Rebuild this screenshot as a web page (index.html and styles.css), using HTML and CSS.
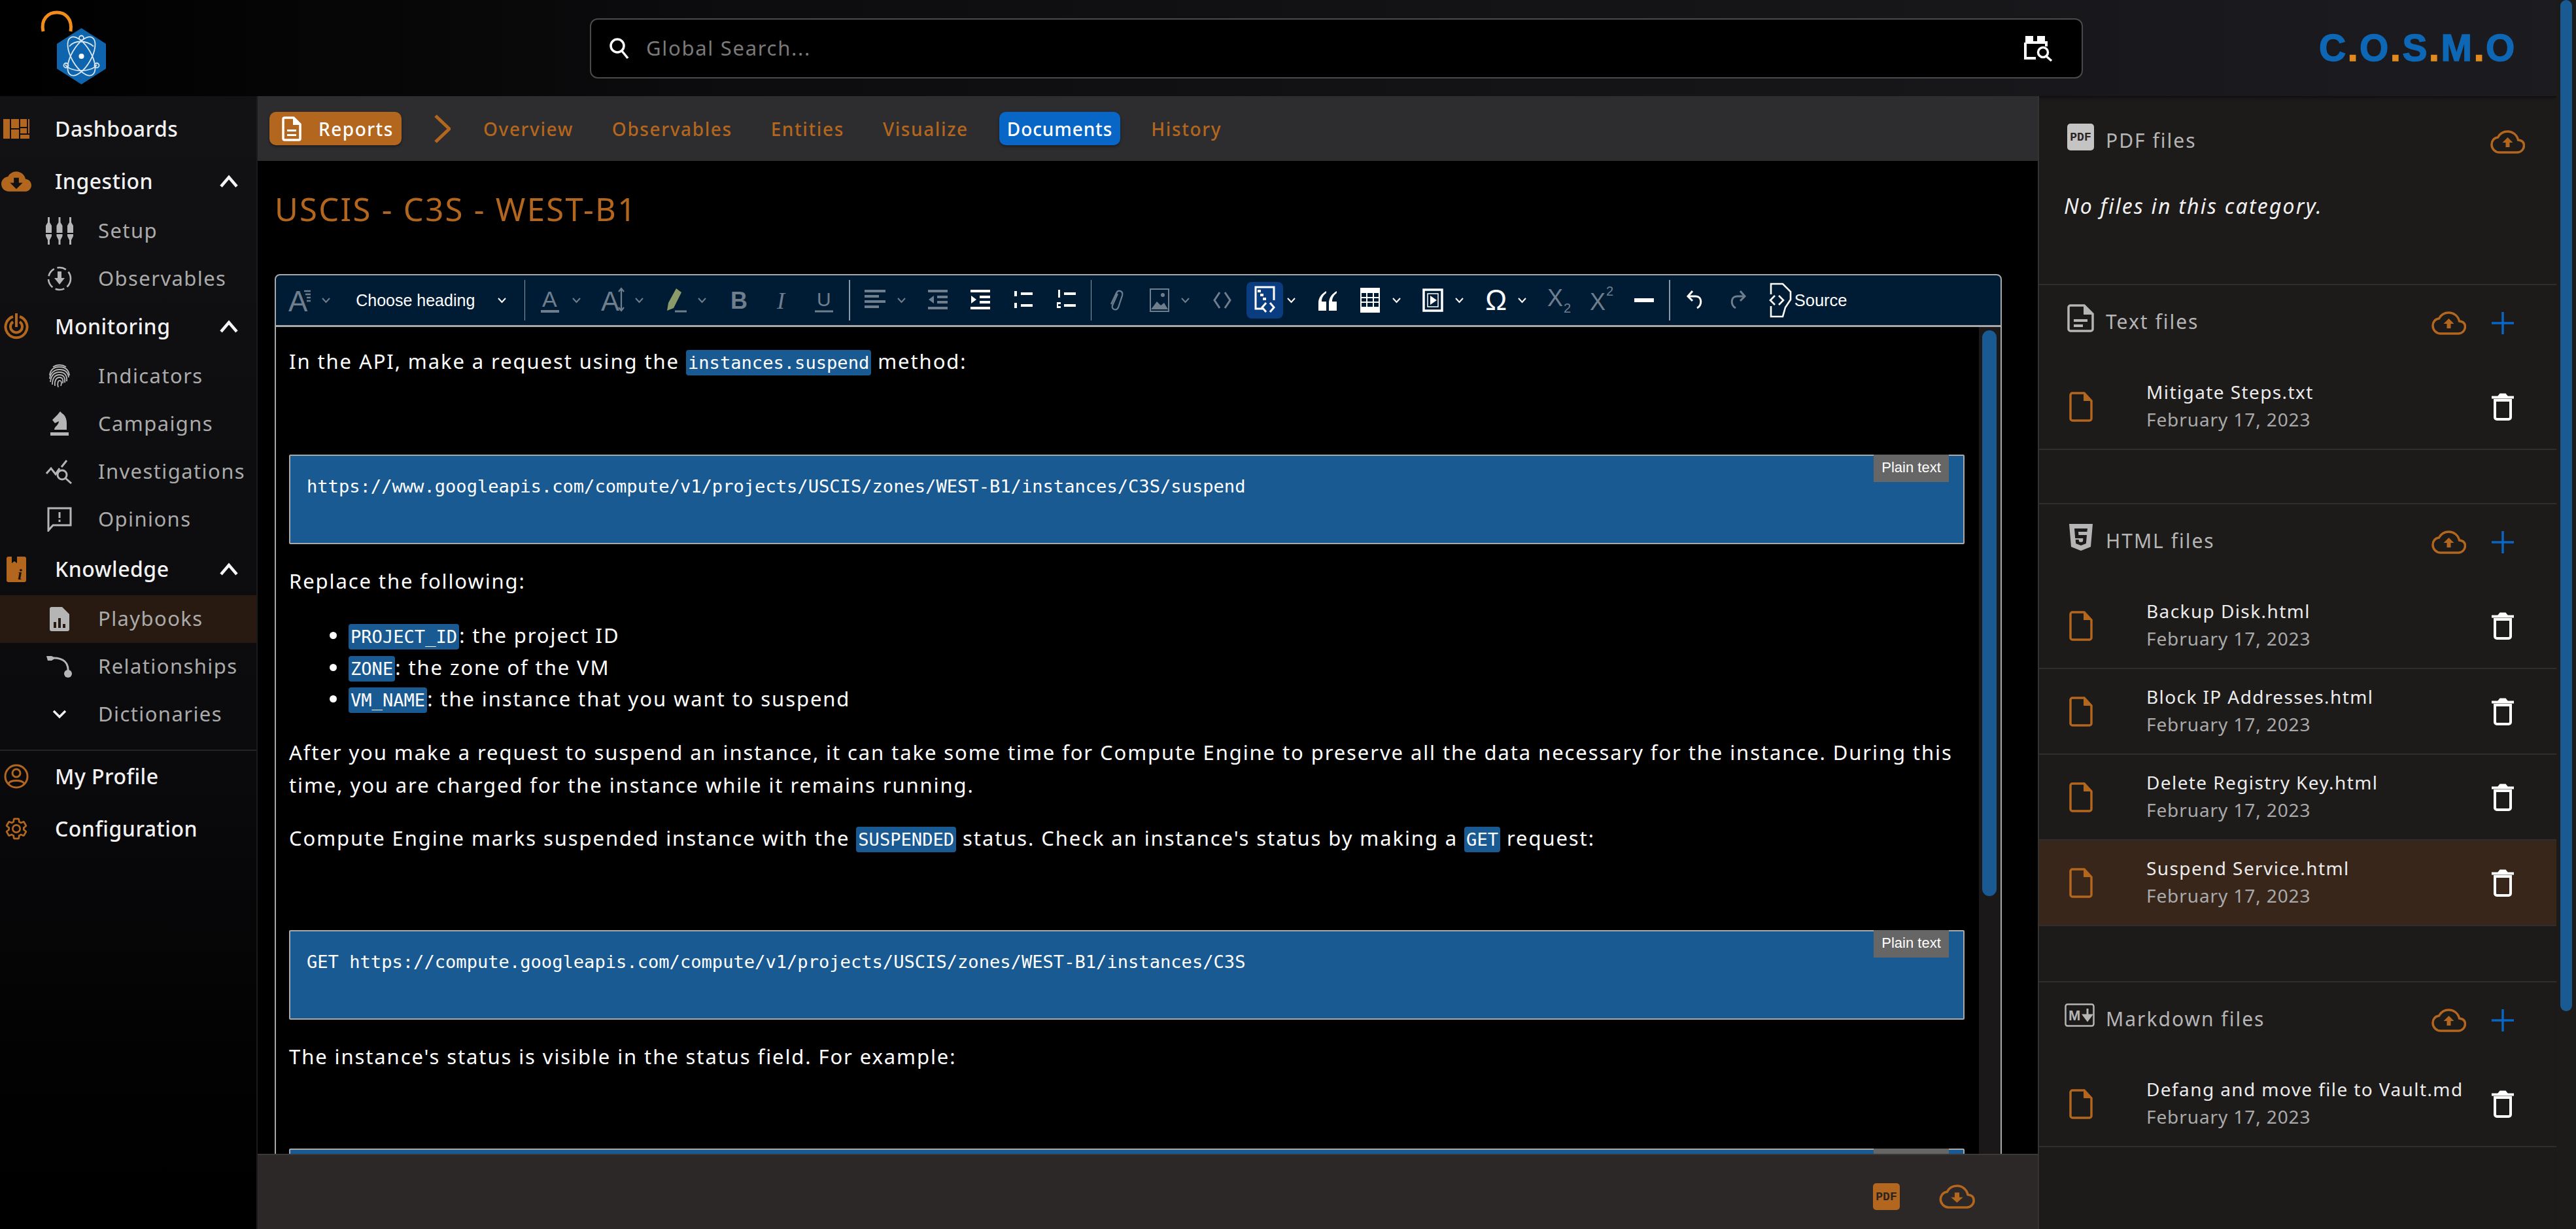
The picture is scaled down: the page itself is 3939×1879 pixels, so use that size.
FILE: index.html
```html
<!DOCTYPE html>
<html lang="en">
<head>
<meta charset="utf-8">
<title>C.O.S.M.O Reports</title>
<link rel="stylesheet" href="styles.css">
</head>
<body>
<svg class="defs" width="0" height="0" aria-hidden="true">
  <defs>
    <symbol id="cloud-up" viewBox="0 0 53 36"><path d="M42.5 15C40.8 7 34 2 26.5 2 20 2 14.500 5.500 11.500 11 5.500 11.500 2 16.500 2 22c0 6.500 5.500 12 12 12h27c6 0 10.500-4.800 10.500-10.500C51.500 18 47.500 15.500 42.500 15z" fill="none" stroke="currentColor" stroke-width="3.500"/><path d="M26.500 11l8 8h-5v7h-6v-7h-5z" fill="currentColor"/></symbol>
    <symbol id="cloud-down" viewBox="0 0 53 36"><path d="M42.500 15C40.800 7 34 2 26.500 2 20 2 14.500 5.500 11.500 11 5.500 11.500 2 16.500 2 22c0 6.500 5.500 12 12 12h27c6 0 10.500-4.800 10.500-10.500C51.500 18 47.500 15.500 42.500 15z" fill="none" stroke="currentColor" stroke-width="3.500"/><path d="M26.500 27l-9-8h5.500v-7h7v7h5.500z" fill="currentColor"/></symbol>
    <symbol id="plus" viewBox="0 0 34 34"><path d="M17 0v34M0 17h34" stroke="currentColor" stroke-width="3.500" fill="none"/></symbol>
    <symbol id="file" viewBox="0 0 36 46"><path d="M5 2h18l11 12v27a3 3 0 0 1-3 3H5a3 3 0 0 1-3-3V5a3 3 0 0 1 3-3z" fill="none" stroke="currentColor" stroke-width="3.500"/><path d="M22 2l12 12H22z" fill="currentColor"/></symbol>
    <symbol id="trash" viewBox="0 0 34 42"><path d="M0 6.500h34" stroke="currentColor" stroke-width="4"/><path d="M11 4l2-2.500h8L23 4z" fill="currentColor" stroke="currentColor" stroke-width="2"/><path d="M5 11h24v26a3 3 0 0 1-3 3H8a3 3 0 0 1-3-3z" fill="none" stroke="currentColor" stroke-width="4"/></symbol>
    <symbol id="chev" viewBox="0 0 15 12"><path d="M2 3l5.500 6L13 3" fill="none" stroke="currentColor" stroke-width="2"/></symbol>
    <symbol id="up" viewBox="0 0 30 24"><path d="M3 20L15 6l12 14" fill="none" stroke="currentColor" stroke-width="4.500"/></symbol>
  </defs>
</svg>

<div class="app">
  <div class="page">
    <header class="top">
      <div class="logo">
        <svg width="105" height="115" viewBox="60 15 105 115">
          <path d="M66 47C62 28 74 18 87 18s24 10 21 29" fill="none" stroke="#f28c1c" stroke-width="5"/>
          <path d="M124.500 42L162 66v38l-37.500 24L87 104V66z" fill="#0f65ad"/>
          <g fill="none" stroke="#d8e6f2" stroke-width="1.800">
            <ellipse cx="124.500" cy="85" rx="33" ry="15" transform="rotate(60 124.500 85)"/>
            <ellipse cx="124.500" cy="85" rx="33" ry="15" transform="rotate(-60 124.500 85)"/>
            <path d="M106 70c8-10 26-10 37 0M100 98c8 12 40 12 48 0"/>
            <circle cx="124.500" cy="57" r="3.500"/><circle cx="101" cy="99" r="3.500"/><circle cx="148" cy="99" r="3.500"/>
          </g>
          <circle cx="124.500" cy="85" r="4" fill="#fff"/>
        </svg>
      </div>
      <div class="search">
        <svg class="search-ic" width="32" height="34" viewBox="0 0 32 34"><circle cx="13" cy="13" r="10" fill="none" stroke="#fff" stroke-width="3.500"/><path d="M20 21l9 11" stroke="#fff" stroke-width="3.500"/></svg>
        <span class="search-ph">Global Search...</span>
        <svg class="search-cal" width="46" height="42" viewBox="0 0 46 42"><path d="M2 12h32v6M2 12v24h16" fill="none" stroke="#fff" stroke-width="4"/><path d="M2 2h12v8H2zM20 2h12v8H20z" fill="#fff"/><circle cx="29" cy="27" r="7.500" fill="none" stroke="#fff" stroke-width="3.500"/><path d="M34 33l8 7" stroke="#fff" stroke-width="3.500"/></svg>
      </div>
      <div class="brand"><span>C</span><i>.</i><span>O</span><i>.</i><span>S</span><i>.</i><span>M</span><i>.</i><span>O</span></div>
    </header>

    <div class="body">
      <nav class="side">
        <a class="ni top-i first">
          <span class="ni-ic or"><svg width="40" height="30" viewBox="0 0 40 30"><path d="M0 0h10v30H0zM12 0h12v14H12zM12 16h12v14H12zM26 0h10v12H26zM38 0h2v22h-2zM26 14h10v8H26zM26 24h14v6H26z" fill="currentColor"/></svg></span>
          <span class="ni-t">Dashboards</span>
        </a>
        <a class="ni top-i gap">
          <span class="ni-ic or"><svg width="46" height="31" viewBox="0 0 24 16"><path d="M19.350 6.040C18.670 2.590 15.640 0 12 0 9.110 0 6.600 1.640 5.350 4.040 2.340 4.360 0 6.910 0 10c0 3.310 2.690 6 6 6h13c2.760 0 5-2.240 5-5 0-2.640-2.050-4.780-4.650-4.960zM17 9l-5 5-5-5h3V5h4v4h3z" fill="currentColor"/></svg></span>
          <span class="ni-t">Ingestion</span>
          <svg class="ni-up" width="30" height="24"><use href="#up"/></svg>
        </a>
        <a class="ni sub subfirst">
          <span class="ni-ic"><svg width="42" height="42" viewBox="0 0 42 42"><path d="M3 0h3v8l3 5v11H0V13l3-5zM19.500 0h3v8l3 5v11h-9V13l3-5zM36 0h3v8l3 5v11h-9V13l3-5zM0 26h9v3l-3 6v7H3v-7l-3-6zM16.500 26h9v3l-3 6v7h-3v-7l-3-6zM33 26h9v3l-3 6v7h-3v-7l-3-6z" fill="currentColor"/></svg></span>
          <span class="ni-t">Setup</span>
        </a>
        <a class="ni sub">
          <span class="ni-ic"><svg width="38" height="38" viewBox="0 0 38 38"><circle cx="19" cy="19" r="17" fill="none" stroke="currentColor" stroke-width="2.600" stroke-dasharray="14 5"/><path d="M16 8h6v10h5l-8 10-8-10h5z" fill="currentColor"/></svg></span>
          <span class="ni-t">Observables</span>
        </a>
        <a class="ni top-i">
          <span class="ni-ic or"><svg width="38" height="40" viewBox="0 0 38 40"><g fill="none" stroke="currentColor" stroke-width="4"><path d="M24 5a16.500 16.500 0 1 1-10 0"/><path d="M24 13a9 9 0 1 1-10 0"/><path d="M19 0v21"/></g></svg></span>
          <span class="ni-t">Monitoring</span>
          <svg class="ni-up" width="30" height="24"><use href="#up"/></svg>
        </a>
        <a class="ni sub subfirst">
          <span class="ni-ic"><svg width="34" height="38" viewBox="0 0 34 38"><g fill="none" stroke="currentColor" stroke-width="1.800"><path d="M7 5c6-4 14-4 20 0"/><path d="M2 18C3 9 9 5 17 5s14 4 15 13"/><path d="M2 23C3 14 9 9 17 9s13 4 14 12"/><path d="M3 28C4 18 9 13 17 13s12 5 11 14"/><path d="M6 32C6 22 10 17 17 17s9 5 8 12"/><path d="M10 34c-1-8 2-13 7-13s6 4 5 9"/><path d="M15 36c-2-6 0-11 3-10s2 5 1 8"/></g></svg></span>
          <span class="ni-t">Indicators</span>
        </a>
        <a class="ni sub">
          <span class="ni-ic"><svg width="28" height="38" viewBox="0 0 28 38"><path d="M15 0l3 3c5 3 7 9 7 15v10H6c0-5 7-7 7-13l-6 3-4-5 8-8z" fill="currentColor"/><path d="M0 32h28v5H0z" fill="currentColor"/></svg></span>
          <span class="ni-t">Campaigns</span>
        </a>
        <a class="ni sub">
          <span class="ni-ic"><svg width="42" height="38" viewBox="0 0 42 38"><g fill="none" stroke="currentColor" stroke-width="3"><path d="M1 22l7-8 7 9 6-9M24 12l8-10"/><circle cx="25" cy="24" r="7"/><path d="M30 29l9 8"/></g></svg></span>
          <span class="ni-t">Investigations</span>
        </a>
        <a class="ni sub">
          <span class="ni-ic"><svg width="40" height="38" viewBox="0 0 40 38"><path d="M3 2h34v26H10l-7 8z" fill="none" stroke="currentColor" stroke-width="3"/><path d="M18.500 8h3v9h-3zM18.500 19.500h3v3.500h-3z" fill="currentColor"/></svg></span>
          <span class="ni-t">Opinions</span>
        </a>
        <a class="ni top-i gap-s">
          <span class="ni-ic or"><svg width="30" height="39" viewBox="0 0 30 39"><path d="M3 0h5v10l4-3 4 3V0h11a3 3 0 0 1 3 3v33a3 3 0 0 1-3 3H3a3 3 0 0 1-3-3V3a3 3 0 0 1 3-3z" fill="currentColor"/><text class="gl-i" x="17" y="35">i</text></svg></span>
          <span class="ni-t">Knowledge</span>
          <svg class="ni-up" width="30" height="24"><use href="#up"/></svg>
        </a>
        <a class="ni sub subfirst active">
          <span class="ni-ic"><svg width="30" height="37" viewBox="0 0 30 37"><path d="M3 0h16l11 11v23a3 3 0 0 1-3 3H3a3 3 0 0 1-3-3V3a3 3 0 0 1 3-3z" fill="currentColor"/><path d="M6 23h4v9H6zM13 17h4v15h-4zM20 26h4v6h-4z" fill="#281a11"/></svg></span>
          <span class="ni-t">Playbooks</span>
        </a>
        <a class="ni sub">
          <span class="ni-ic"><svg width="42" height="38" viewBox="0 0 42 38"><path d="M12 6c14 0 24 6 22 24" fill="none" stroke="currentColor" stroke-width="3"/><path d="M1 3h8l6 3-6 4H3z" fill="currentColor"/><circle cx="34" cy="30" r="6" fill="currentColor"/></svg></span>
          <span class="ni-t">Relationships</span>
        </a>
        <a class="ni sub">
          <span class="ni-ic lt"><svg width="22" height="14" viewBox="0 0 22 14"><path d="M2 2l9 9 9-9" fill="none" stroke="currentColor" stroke-width="3.500"/></svg></span>
          <span class="ni-t">Dictionaries</span>
        </a>
        <div class="side-foot">
          <a class="ni top-i">
            <span class="ni-ic or"><svg width="38" height="38" viewBox="0 0 38 38"><circle cx="19" cy="19" r="17" fill="none" stroke="currentColor" stroke-width="3"/><circle cx="19" cy="14" r="6" fill="none" stroke="currentColor" stroke-width="3"/><path d="M7 30c3-6 21-6 24 0" fill="none" stroke="currentColor" stroke-width="3"/></svg></span>
            <span class="ni-t">My Profile</span>
          </a>
          <a class="ni top-i gap">
            <span class="ni-ic or"><svg width="38" height="38" viewBox="0 0 24 24"><path d="M19.140 12.940c.04-.3.06-.61.06-.94 0-.32-.02-.64-.07-.94l2.030-1.580c.18-.14.23-.41.12-.61l-1.920-3.320c-.12-.22-.37-.29-.59-.22l-2.390.96c-.5-.38-1.030-.7-1.620-.94l-.36-2.540c-.04-.24-.24-.41-.48-.41h-3.840c-.24 0-.43.17-.47.41l-.36 2.540c-.59.24-1.130.57-1.620.94l-2.390-.96c-.22-.08-.47 0-.59.22L2.740 8.870c-.12.21-.08.47.12.61l2.030 1.580c-.05.3-.09.63-.09.94s.02.64.07.94l-2.030 1.580c-.18.14-.23.41-.12.61l1.920 3.320c.12.22.37.29.59.22l2.390-.96c.5.38 1.030.7 1.620.94l.36 2.540c.05.24.24.41.48.41h3.840c.24 0 .44-.17.47-.41l.36-2.540c.59-.24 1.130-.56 1.620-.94l2.390.96c.22.08.47 0 .59-.22l1.920-3.320c.12-.22.07-.47-.12-.61l-2.010-1.580zM12 15.600c-1.980 0-3.600-1.620-3.600-3.600s1.620-3.600 3.600-3.600 3.600 1.620 3.600 3.600-1.620 3.600-3.600 3.600z" fill="none" stroke="currentColor" stroke-width="1.700"/></svg></span>
            <span class="ni-t">Configuration</span>
          </a>
        </div>
      </nav>

      <main class="main">
        <div class="tabs">
          <a class="reports">
            <svg width="30" height="38" viewBox="0 0 30 38"><path d="M4 2h14l10 10v22a2 2 0 0 1-2 2H4a2 2 0 0 1-2-2V4a2 2 0 0 1 2-2z" fill="none" stroke="#fff" stroke-width="3.500"/><path d="M17 2l11 11H17zM8 20h14v3H8zM8 27h14v3H8z" fill="#fff"/></svg>
            <span>Reports</span>
          </a>
          <svg class="crumb" width="25" height="44" viewBox="0 0 25 44"><path d="M2 2l21 20L2 42" fill="none" stroke="#b2661e" stroke-width="5"/></svg>
          <a class="tab">Overview</a>
          <a class="tab">Observables</a>
          <a class="tab">Entities</a>
          <a class="tab">Visualize</a>
          <a class="tab on">Documents</a>
          <a class="tab">History</a>
        </div>

        <div class="content">
          <h1 class="title">USCIS - C3S - WEST-B1</h1>
          <div class="editor">
            <div class="toolbar">
              <div class="dd dim"><span class="btn"><svg width="36" height="50" viewBox="0 0 36 50"><text class="gl-t" x="0" y="42" font-size="44">A</text><path d="M24 11h10M26 16h8M28 21h6M28 26h6" stroke="currentColor" stroke-width="2.500"/></svg></span><svg class="ch" width="15" height="12"><use href="#chev"/></svg></div>
              <div class="heading"><span>Choose heading</span><svg class="ch" width="15" height="12"><use href="#chev"/></svg></div>
              <i class="sep"></i>
              <div class="dd dim"><span class="btn"><svg width="28" height="44" viewBox="0 0 28 44"><text class="gl-t" x="2" y="32" font-size="34">A</text><path d="M0 39h28" stroke="currentColor" stroke-width="4"/></svg></span><svg class="ch" width="15" height="12"><use href="#chev"/></svg></div>
              <div class="dd dim"><span class="btn"><svg width="36" height="50" viewBox="0 0 36 50"><text class="gl-t" x="0" y="41" font-size="42">A</text><path d="M31 7v34M27 12l4-5 4 5M27 36l4 5 4-5" fill="none" stroke="currentColor" stroke-width="2.200"/></svg></span><svg class="ch" width="15" height="12"><use href="#chev"/></svg></div>
              <div class="dd dim"><span class="btn"><svg width="36" height="40" viewBox="0 0 36 40"><path d="M14 32L4 36l2-12L18 2l8 6z" fill="#8c9a6a"/><path d="M16 37h18" stroke="currentColor" stroke-width="3"/></svg></span><svg class="ch" width="15" height="12"><use href="#chev"/></svg></div>
              <span class="btn dim"><svg width="28" height="44" viewBox="0 0 28 44"><text class="gl-b" x="1" y="35" font-size="36">B</text></svg></span>
              <span class="btn dim"><svg width="24" height="44" viewBox="0 0 24 44"><text class="gl-l" x="5" y="35" font-size="36">I</text></svg></span>
              <span class="btn dim"><svg width="28" height="44" viewBox="0 0 28 44"><text class="gl-t" x="3" y="31" font-size="30">U</text><path d="M0 39h28" stroke="currentColor" stroke-width="3"/></svg></span>
              <i class="sep"></i>
              <div class="dd dim"><span class="btn"><svg width="32" height="40" viewBox="0 0 32 40"><path d="M0 6h32M0 14h22M0 22h32M0 30h22" stroke="currentColor" stroke-width="4"/></svg></span><svg class="ch" width="15" height="12"><use href="#chev"/></svg></div>
              <span class="btn dim"><svg width="30" height="40" viewBox="0 0 30 40"><path d="M0 6h30M14 15h16M14 23h16M0 32h30" stroke="currentColor" stroke-width="4"/><path d="M9 13v12l-8-6z" fill="currentColor"/></svg></span>
              <span class="btn lit"><svg width="30" height="40" viewBox="0 0 30 40"><path d="M0 6h30M14 15h16M14 23h16M0 32h30" stroke="currentColor" stroke-width="4"/><path d="M1 13v12l8-6z" fill="currentColor"/></svg></span>
              <span class="btn lit"><svg width="30" height="40" viewBox="0 0 30 40"><path d="M12 10h18M12 28h18" stroke="currentColor" stroke-width="4"/><path d="M2 6h4v8H2zM2 24h4v8H2z" fill="currentColor"/></svg></span>
              <span class="btn lit"><svg width="30" height="40" viewBox="0 0 30 40"><path d="M12 10h18M12 28h18" stroke="currentColor" stroke-width="4"/><path d="M3 4h3v12H3zM1 23h6v3H3v3h4v3H1v-3" fill="currentColor"/></svg></span>
              <i class="sep"></i>
              <span class="btn dim"><svg width="24" height="40" viewBox="0 0 24 40"><path d="M14 10L6 28c-2 6 6 9 9 3l6-18c2-7-6-10-9-4L4 26" fill="none" stroke="currentColor" stroke-width="2.200"/></svg></span>
              <div class="dd dim"><span class="btn"><svg width="30" height="36" viewBox="0 0 30 36"><path d="M1 1h28v34H1z" fill="none" stroke="currentColor" stroke-width="2"/><path d="M2 32l9-12 6 6 5-4 6 10z" fill="currentColor"/><circle cx="20" cy="10" r="3" fill="currentColor"/></svg></span><svg class="ch" width="15" height="12"><use href="#chev"/></svg></div>
              <span class="btn dim"><svg width="28" height="40" viewBox="0 0 28 40"><path d="M10 8L2 20l8 12M18 8l8 12-8 12" fill="none" stroke="currentColor" stroke-width="3"/></svg></span>
              <div class="dd lit"><span class="btn"><span class="act"><svg width="34" height="46" viewBox="0 0 34 46"><path d="M14 36H3V3h28v20" fill="none" stroke="currentColor" stroke-width="3"/><path d="M6 7h5v4H6zM10 13h5v4h-5zM14 19h5v4h-5z" fill="currentColor"/><path d="M19 27l-6 7 6 7M25 27l6 7-6 7" fill="none" stroke="currentColor" stroke-width="3"/></svg></span></span><svg class="ch" width="15" height="12"><use href="#chev"/></svg></div>
              <span class="btn lit"><svg width="30" height="40" viewBox="0 0 30 40"><path d="M13 6C6 10 1 16 1 24v12h12V22H6c0-6 3-10 7-13zM29 6c-7 4-12 10-12 18v12h12V22h-7c0-6 3-10 7-13z" fill="currentColor"/></svg></span>
              <div class="dd lit"><span class="btn"><svg width="30" height="38" viewBox="0 0 30 38"><path d="M1 1h28v36H1z" fill="none" stroke="currentColor" stroke-width="2"/><path d="M1 1h28v7H1zM1 29h28v8H1z" fill="currentColor"/><path d="M1 15h28M1 22h28M10 8v22M20 8v22" stroke="currentColor" stroke-width="2"/></svg></span><svg class="ch" width="15" height="12"><use href="#chev"/></svg></div>
              <div class="dd lit"><span class="btn"><svg width="32" height="36" viewBox="0 0 32 36"><path d="M2 2h28v32H2z" fill="none" stroke="currentColor" stroke-width="3.500"/><path d="M8 8h16v20H8z" fill="none" stroke="currentColor" stroke-width="1.500"/><path d="M12 11l10 7-10 7z" fill="currentColor"/></svg></span><svg class="ch" width="15" height="12"><use href="#chev"/></svg></div>
              <div class="dd lit"><span class="btn"><span class="omega">Ω</span></span><svg class="ch" width="15" height="12"><use href="#chev"/></svg></div>
              <span class="btn dim"><svg width="36" height="50" viewBox="0 0 36 50"><text class="gl-t" x="0" y="34" font-size="36">X</text><text class="gl-t" x="25" y="44" font-size="20">2</text></svg></span>
              <span class="btn dim"><svg width="36" height="50" viewBox="0 0 36 50"><text class="gl-t" x="0" y="40" font-size="36">X</text><text class="gl-t" x="25" y="18" font-size="20">2</text></svg></span>
              <span class="btn lit"><svg width="30" height="12" viewBox="0 0 30 12"><path d="M0 6h30" stroke="currentColor" stroke-width="6"/></svg></span>
              <i class="sep"></i>
              <span class="btn lit"><svg width="28" height="40" viewBox="0 0 28 40"><path d="M10 6L3 14l7 7" fill="none" stroke="currentColor" stroke-width="3"/><path d="M3 14h12c10 0 10 14 2 18" fill="none" stroke="currentColor" stroke-width="3"/></svg></span>
              <span class="btn dim"><svg width="28" height="40" viewBox="0 0 28 40"><path d="M18 6l7 8-7 7" fill="none" stroke="currentColor" stroke-width="3"/><path d="M25 14H13C3 14 3 28 11 32" fill="none" stroke="currentColor" stroke-width="3"/></svg></span>
              <div class="source lit"><svg width="40" height="54" viewBox="0 0 40 54"><path d="M4 18V2h18l12 12v12l-8 12-4 14H4V36" fill="none" stroke="currentColor" stroke-width="2.600"/><path d="M10 20l-7 7 7 7M16 20l7 7-7 7" fill="none" stroke="currentColor" stroke-width="2.600"/></svg><span>Source</span></div>
            </div>

            <div class="ed-body">
              <div class="doc">
                <p class="p1">In the API, make a request using the <code>instances.suspend</code> method:</p>
                <div class="pre pre1"><span class="lang">Plain text</span>https://www.googleapis.com/compute/v1/projects/USCIS/zones/WEST-B1/instances/C3S/suspend</div>
                <p class="p2">Replace the following:</p>
                <ul class="list">
                  <li><code>PROJECT_ID</code>: the project ID</li>
                  <li><code>ZONE</code>: the zone of the VM</li>
                  <li><code>VM_NAME</code>: the instance that you want to suspend</li>
                </ul>
                <p class="p3">After you make a request to suspend an instance, it can take some time for Compute Engine to preserve all the data necessary for the instance. During this<br>time, you are charged for the instance while it remains running.</p>
                <p class="p4">Compute Engine marks suspended instance with the <code>SUSPENDED</code> status. Check an instance's status by making a <code>GET</code> request:</p>
                <div class="pre pre2"><span class="lang">Plain text</span>GET https://compute.googleapis.com/compute/v1/projects/USCIS/zones/WEST-B1/instances/C3S</div>
                <p class="p5">The instance's status is visible in the status field. For example:</p>
                <div class="pre pre3"><span class="lang"></span></div>
              </div>
              <div class="ed-scroll"><div class="ed-thumb"></div></div>
            </div>
          </div>
        </div>

        <div class="bottom">
          <svg width="41" height="41" viewBox="0 0 41 41"><rect width="41" height="41" rx="5" fill="#b2661e"/><text class="gl-pdf" x="20.500" y="26" font-size="18">PDF</text></svg>
          <svg class="bottom-cloud" width="55" height="37"><use href="#cloud-down"/></svg>
        </div>
      </main>

      <aside class="panel">
        <section class="sec sec-pdf">
          <div class="sec-h">
            <svg class="sec-ic" width="41" height="41" viewBox="0 0 41 41"><rect width="41" height="41" rx="5" fill="#c4c4c4"/><text class="gl-pdf" x="20.500" y="26" font-size="18">PDF</text></svg>
            <span class="sec-t">PDF files</span>
            <div class="acts acts-solo"><svg class="up-ic" width="53" height="36"><use href="#cloud-up"/></svg></div>
          </div>
          <p class="none">No files in this category.</p>
        </section>

        <section class="sec">
          <div class="sec-h">
            <svg class="sec-ic" width="41" height="43" viewBox="0 0 41 43"><path d="M5 2h21l13 13v23a3 3 0 0 1-3 3H5a3 3 0 0 1-3-3V5a3 3 0 0 1 3-3z" fill="none" stroke="#b5b5b5" stroke-width="3.500"/><path d="M25 2l14 14H25zM10 23h21v4H10zM10 31h14v4H10z" fill="#b5b5b5"/></svg>
            <span class="sec-t">Text files</span>
            <div class="acts"><svg class="up-ic" width="53" height="36"><use href="#cloud-up"/></svg><svg class="plus-ic" width="34" height="34"><use href="#plus"/></svg></div>
          </div>
          <div class="row"><svg class="file-ic" width="36" height="46"><use href="#file"/></svg><div class="row-t"><b>Mitigate Steps.txt</b><span>February 17, 2023</span></div><svg class="trash-ic" width="34" height="42"><use href="#trash"/></svg></div>
        </section>

        <section class="sec sec-html">
          <div class="sec-h">
            <svg class="sec-ic" width="41" height="43" viewBox="-3 0 41 43"><path d="M0 1h36l-3 35-15 6-15-6z" fill="#b5b5b5"/><path d="M8 8h20l-.6 5H14l.4 5h12.600l-1.200 13-7.800 3-7.800-3-.5-6h5l.3 3 3 1 3-1 .4-5H9.200z" fill="#1d1a1a"/></svg>
            <span class="sec-t">HTML files</span>
            <div class="acts"><svg class="up-ic" width="53" height="36"><use href="#cloud-up"/></svg><svg class="plus-ic" width="34" height="34"><use href="#plus"/></svg></div>
          </div>
          <div class="row"><svg class="file-ic" width="36" height="46"><use href="#file"/></svg><div class="row-t"><b>Backup Disk.html</b><span>February 17, 2023</span></div><svg class="trash-ic" width="34" height="42"><use href="#trash"/></svg></div>
          <div class="row"><svg class="file-ic" width="36" height="46"><use href="#file"/></svg><div class="row-t"><b>Block IP Addresses.html</b><span>February 17, 2023</span></div><svg class="trash-ic" width="34" height="42"><use href="#trash"/></svg></div>
          <div class="row"><svg class="file-ic" width="36" height="46"><use href="#file"/></svg><div class="row-t"><b>Delete Registry Key.html</b><span>February 17, 2023</span></div><svg class="trash-ic" width="34" height="42"><use href="#trash"/></svg></div>
          <div class="row row-on"><svg class="file-ic" width="36" height="46"><use href="#file"/></svg><div class="row-t"><b>Suspend Service.html</b><span>February 17, 2023</span></div><svg class="trash-ic" width="34" height="42"><use href="#trash"/></svg></div>
        </section>

        <section class="sec sec-last">
          <div class="sec-h">
            <svg class="sec-ic md-ic" width="46" height="36" viewBox="0 0 46 36"><rect x="1.500" y="1.500" width="43" height="33" rx="3" fill="none" stroke="#b5b5b5" stroke-width="2.500"/><text class="gl-md" x="6" y="26" font-size="22">M</text><path d="M35 8v12M29 18l6 8 6-8z" stroke="#b5b5b5" stroke-width="3" fill="#b5b5b5"/></svg>
            <span class="sec-t">Markdown files</span>
            <div class="acts"><svg class="up-ic" width="53" height="36"><use href="#cloud-up"/></svg><svg class="plus-ic" width="34" height="34"><use href="#plus"/></svg></div>
          </div>
          <div class="row"><svg class="file-ic" width="36" height="46"><use href="#file"/></svg><div class="row-t"><b>Defang and move file to Vault.md</b><span>February 17, 2023</span></div><svg class="trash-ic" width="34" height="42"><use href="#trash"/></svg></div>
        </section>
      </aside>
    </div>
  </div>
  <div class="page-scroll"><div class="page-thumb"></div></div>
</div>
</body>
</html>
```

FILE: styles.css
```css
* { box-sizing: border-box; }
html, body { margin: 0; height: 100%; background: #000; overflow: hidden; }
body { font-family: "Noto Sans", sans-serif; color: #fff; }
p, h1, ul { margin: 0; padding: 0; }
.defs { position: absolute; }
svg { display: block; flex: none; }

.app { display: flex; height: 1879px; width: 3939px; }
.page { width: 3909px; display: flex; flex-direction: column; }
.page-scroll { width: 30px; background: #1d1a1a; padding-left: 6px; }
.page-thumb { width: 18px; height: 1546px; background: #1a5a92; border-radius: 9px; }

/* Header */
.top { height: 147px; flex: none; display: flex; align-items: center; background: linear-gradient(90deg, #000 0%, #0d0d0f 30%, #1c1b1f 100%); }
.logo { margin-left: 60px; width: 105px; }
.search { margin-left: 737px; width: 2283px; height: 92px; background: #000; border: 2px solid #4a4a4a; border-radius: 12px; display: flex; align-items: center; padding-left: 27px; }
.search-ph { margin-left: 25px; padding-bottom: 2px; font-size: 31px; color: #7a7a7a; letter-spacing: 1.700px; }
.search-cal { margin-left: auto; margin-right: 42px; }
.brand { margin-left: auto; margin-right: 61px; font-family: "Liberation Sans", sans-serif; font-weight: 700; font-size: 57px; line-height: 57px; letter-spacing: 2.600px; color: #0d67b5; -webkit-text-stroke: 1.500px currentColor; }
.brand i { font-style: normal; color: #e08a20; }

.body { flex: 1; display: flex; min-height: 0; }

/* Sidebar */
.side { width: 394px; flex: none; padding-top: 13.500px; background: linear-gradient(#121214 0%, #0a0a0c 60%, #020203 85%, #000 100%); border-right: 2px solid #1b1b1d; }
.ni { display: flex; align-items: center; height: 73px; }
.ni-ic { width: 50px; display: flex; justify-content: center; color: #b5b5b5; flex: none; }
.ni-ic.or { color: #b2661e; }
.ni-ic.lt { color: #f0f0f0; }
.ni-t { margin-left: 34px; white-space: nowrap; }
.top-i .ni-t { font-size: 32px; color: #f2f2f2; font-weight: 500; letter-spacing: .5px; padding-bottom: 2px; }
.sub { padding-left: 66px; }
.sub .ni-t { font-size: 31px; color: #ababab; letter-spacing: 1.400px; padding-bottom: 2px; }
.gap { margin-top: 7px; }
.gap-s { margin-top: 3px; }
.subfirst { margin-top: 3px; }
.ni-up { margin-left: auto; margin-right: 27px; color: #f5f5f5; }
.active { background: #281a11; }
.side-foot { margin-top: 17px; padding-top: 3px; border-top: 2px solid #232325; }
.side-foot .gap { margin-top: 7px; }

/* Main */
.main { flex: 1; min-width: 0; display: flex; flex-direction: column; border-right: 2px solid #333; background: #000; }
.tabs { height: 99px; flex: none; display: flex; align-items: center; background: #2d2c2f; padding-left: 18px; }
.reports { width: 202px; height: 51px; background: #b2661e; border-radius: 10px; display: flex; align-items: center; padding-left: 19px; box-shadow: 0 2px 4px rgba(0,0,0,.4); font-size: 28px; font-weight: 500; letter-spacing: 1.500px; }
.reports span { margin-left: 26px; }
.crumb { margin-left: 50px; margin-right: 38px; }
.tab { height: 51px; display: flex; align-items: center; padding: 0 12px; margin-right: 35px; font-size: 28px; font-weight: 500; letter-spacing: 1.600px; color: #b2661e; border-radius: 10px; }
.tab.on { background: #0866c6; color: #fff; letter-spacing: .9px; box-shadow: 0 2px 4px rgba(0,0,0,.4); }

.content { flex: 1; min-height: 0; padding: 43px 55px 0 26px; display: flex; flex-direction: column; background: #000; }
.title { font-size: 49px; line-height: 60px; font-weight: 400; letter-spacing: 2.300px; color: #b2661e; margin-bottom: 70px; white-space: nowrap; }
.editor { flex: 1; min-height: 0; display: flex; flex-direction: column; }

.toolbar { height: 81px; flex: none; display: flex; align-items: center; background: #001c35; border: solid #a9a9a9; border-width: 2px 2px 3px; border-radius: 8px 8px 0 0; padding-left: 4px; }
.btn { width: 65.200px; height: 56px; flex: none; display: flex; align-items: center; justify-content: center; }
.dd { display: flex; align-items: center; width: 96.200px; flex: none; }
.dim { color: #6f7e8d; }
.lit { color: #fff; }
.sep { width: 1.500px; height: 62px; background: #8b97a3; margin: 0 5.500px; flex: none; }
.heading { margin-left: 22px; width: 252px; display: flex; align-items: center; font-family: "Liberation Sans", sans-serif; font-size: 25px; color: #fff; white-space: nowrap; }
.heading .ch { margin-left: 34px; color: #fff; }
.act { width: 56px; height: 56px; border-radius: 8px; background: #0a3c80; display: flex; align-items: center; justify-content: center; }
.omega { font-family: "Liberation Sans", sans-serif; font-size: 44px; line-height: 50px; }
.source { display: flex; align-items: center; margin-left: 14px; font-family: "Liberation Sans", sans-serif; font-size: 25.500px; }
.gl-t { font-family: "Liberation Sans", sans-serif; fill: currentColor; font-weight: 400; }
.gl-b { font-family: "Liberation Sans", sans-serif; fill: currentColor; font-weight: 700; }
.gl-l { font-family: "Liberation Serif", serif; fill: currentColor; font-style: italic; }
.gl-i { font-family: "Liberation Serif", serif; font-style: italic; font-weight: 700; font-size: 24px; fill: #1a1008; }
.gl-pdf { font-family: "Liberation Mono", monospace; font-weight: 700; fill: #2a2422; text-anchor: middle; }
.gl-md { font-family: "Liberation Sans", sans-serif; font-weight: 700; fill: #b5b5b5; }

.ed-body { flex: 1; min-height: 0; display: flex; border: solid #a9a9a9; border-width: 0 2px; }
.doc { flex: 1; min-width: 0; overflow: hidden; padding: 28px 22px 0 20px; font-size: 31px; letter-spacing: 1.900px; line-height: 49px; color: #fff; white-space: nowrap; }
.ed-scroll { width: 33px; flex: none; background: #1a1818; padding: 5px 0 0 5px; }
.ed-thumb { width: 22px; height: 865px; background: #1a5a92; border-radius: 11px; }

code { font-family: "DejaVu Sans Mono", monospace; font-size: 27.100px; line-height: 1; letter-spacing: 0; background: #1a5a92; border-radius: 4px; padding: 4px 3px; }
.pre { position: relative; height: 137px; background: #1a5a92; border: 2px solid #a9a9a9; border-radius: 2px; padding: 24px 25px; font-family: "DejaVu Sans Mono", monospace; font-size: 27.100px; letter-spacing: 0; line-height: 45px; }
.lang { position: absolute; top: -2px; right: 22px; width: 115px; height: 42px; background: #666; color: #fff; font-family: "Liberation Sans", sans-serif; font-size: 22px; line-height: 40px; text-align: center; }
.pre1 { margin-top: 118px; }
.p2 { margin-top: 32px; }
.list { margin-top: 34px; padding-left: 91px; line-height: 48.500px; }
.p3 { margin-top: 32px; line-height: 50px; }
.p4 { margin-top: 31px; line-height: 50px; }
.pre2 { margin-top: 116px; }
.p5 { margin-top: 31px; line-height: 50px; }
.pre3 { margin-top: 116px; }

.bottom { height: 115px; flex: none; background: #2c2827; border-top: 2px solid #3a3838; display: flex; align-items: center; justify-content: flex-end; padding: 14px 96px 0 0; position: relative; z-index: 1; }
.bottom-cloud { margin-left: 60px; color: #b2661e; }

/* Right panel */
.panel { width: 791px; flex: none; background: #1d1a1a; box-shadow: inset 0 6px 6px -6px #000; }
.sec { padding-bottom: 81px; border-bottom: 2px solid #2f2d2d; }
.sec-pdf { padding-top: 12px; padding-bottom: 96px; }
.sec-html { padding-bottom: 84px; }
.sec-last { border-bottom: 0; }
.sec-h { height: 110px; margin-bottom: 11px; display: flex; align-items: center; padding-left: 43px; }
.sec-pdf .sec-h { margin-bottom: 0; }
.sec-ic { margin-bottom: 10px; }
.md-ic { margin-left: -4px; margin-right: -1px; }
.sec-t { margin-left: 18px; font-size: 30px; letter-spacing: 2px; color: #b5b5b5; }
.acts { margin-left: auto; display: flex; align-items: center; padding-right: 65px; margin-top: 6px; color: #b2661e; }
.acts-solo { padding-right: 48px; }
.plus-ic { margin-left: 39px; color: #0866c6; }
.none { margin-top: 23px; padding-left: 38px; font-size: 32px; letter-spacing: 2.200px; line-height: 46px; font-style: italic; color: #f0f0f0; }
.row { height: 131px; display: flex; align-items: center; padding-left: 46px; border-bottom: 2px solid #2f2d2d; }
.row-on { background: #38261b; }
.file-ic { color: #b2661e; }
.row-t { margin-left: 82px; padding-bottom: 3px; display: flex; flex-direction: column; font-size: 28px; line-height: 42px; white-space: nowrap; }
.row-t b { font-weight: 400; letter-spacing: 1.400px; color: #ececec; }
.row-t span { letter-spacing: .9px; color: #aaa; }
.trash-ic { margin-left: auto; margin-right: 65px; color: #fff; }
```
